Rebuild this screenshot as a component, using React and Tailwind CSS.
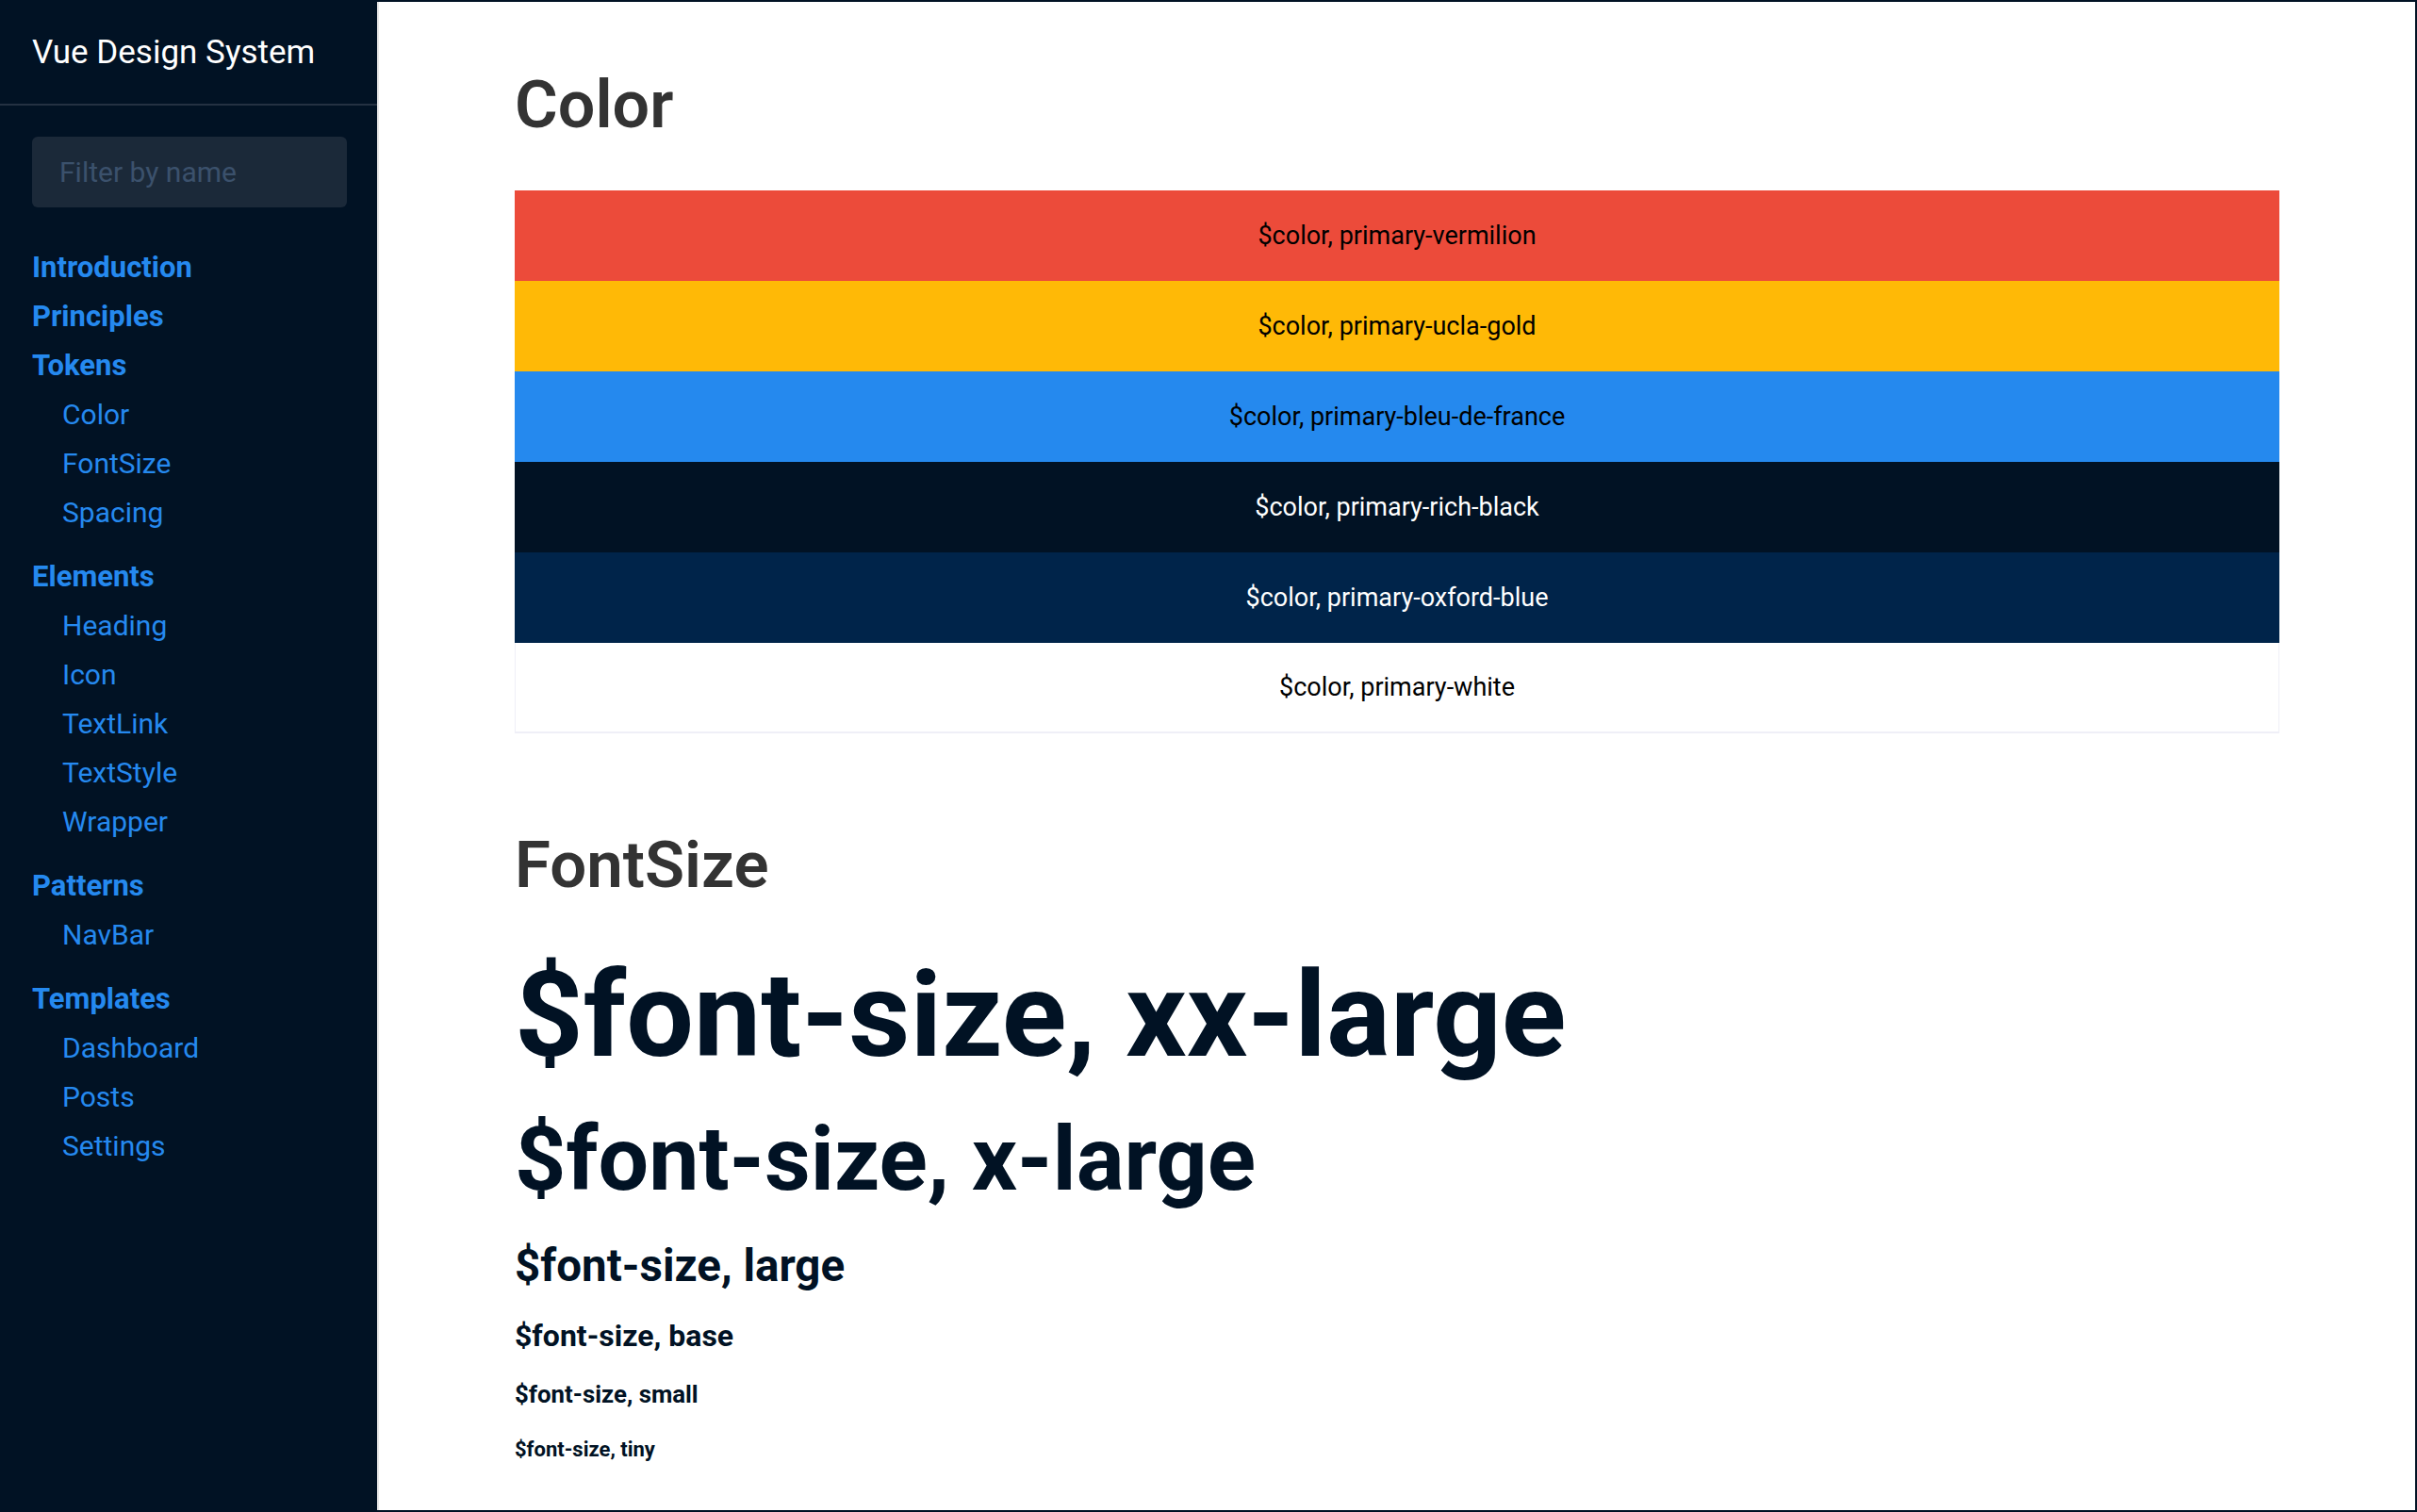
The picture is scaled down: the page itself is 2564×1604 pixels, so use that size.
import React from "react";

const FONT = { fontFamily: "Roboto, 'Noto Sans', Arial, sans-serif" };

const nav = [
  { title: "Introduction" },
  { title: "Principles" },
  { title: "Tokens", items: ["Color", "FontSize", "Spacing"] },
  { title: "Elements", items: ["Heading", "Icon", "TextLink", "TextStyle", "Wrapper"] },
  { title: "Patterns", items: ["NavBar"] },
  { title: "Templates", items: ["Dashboard", "Posts", "Settings"] },
];

const swatches = [
  { name: "primary-vermilion", cls: "bg-[#ec4b3a] text-black" },
  { name: "primary-ucla-gold", cls: "bg-[#ffb906] text-black" },
  { name: "primary-bleu-de-france", cls: "bg-[#2589ee] text-black" },
  { name: "primary-rich-black", cls: "bg-[#011224] text-white" },
  { name: "primary-oxford-blue", cls: "bg-[#00244a] text-white" },
  { name: "primary-white", cls: "bg-white text-black border-x border-b-2 border-[#efeff7]" },
];

function Sidebar() {
  return (
    <aside className="w-[400px] shrink-0 bg-[#011224] flex flex-col">
      <div className="h-[110px] flex items-center px-[34px] border-b-2 border-[#243142]">
        <span className="text-white text-[35px] font-normal leading-normal">Vue Design System</span>
      </div>
      <div className="mt-[33px] mx-[34px] w-[334px] h-[75px] rounded-[6px] bg-[#1b2939] flex items-center pl-[29px]">
        <span className="text-[#3b516c] text-[30px] leading-none">Filter by name</span>
      </div>
      <nav className="mt-[38px] px-[34px] flex flex-col">
        {nav.map((g) => (
          <div key={g.title} className={g.items ? "mb-[16px]" : ""}>
            <div className="h-[52px] leading-[52px] text-[31px] font-bold text-[#2589ef]">{g.title}</div>
            {g.items &&
              g.items.map((it) => (
                <div key={it} className="h-[52px] leading-[52px] text-[30px] font-normal text-[#2589ef] pl-[32px]">
                  {it}
                </div>
              ))}
          </div>
        ))}
      </nav>
    </aside>
  );
}

function Main() {
  return (
    <main className="flex-1 bg-white border-l-2 border-[#e6e6e6] px-[144px] overflow-hidden">
      <h1 className="mt-[67px] text-[70px] leading-[84px] font-semibold text-[#333333]">Color</h1>
      <div className="mt-[49px] flex flex-col">
        {swatches.map((s) => (
          <div key={s.name} className={`h-[96px] flex items-center justify-center text-[27px] ${s.cls}`}>
            $color, {s.name}
          </div>
        ))}
      </div>
      <h2 className="mt-[98px] text-[69px] leading-[84px] font-semibold text-[#333333]">FontSize</h2>
      <div className="text-[#011224] font-bold">
        <div className="mt-[38px] text-[127px] leading-[158px]">$font-size, xx-large</div>
        <div className="mt-[14px] text-[95px] leading-[119px]">$font-size, x-large</div>
        <div className="mt-[25px] text-[47.5px] leading-[59px]">$font-size, large</div>
        <div className="mt-[25px] text-[32px] leading-[38px]">$font-size, base</div>
        <div className="mt-[27px] text-[25.8px] leading-[32px]">$font-size, small</div>
        <div className="mt-[29px] text-[22px] leading-[27px]">$font-size, tiny</div>
      </div>
    </main>
  );
}

export default function App() {
  return (
    <div style={FONT} className="w-[2564px] h-[1604px] bg-[#011224] pt-[2px] pr-[2px] pb-[2px] flex overflow-hidden">
      <Sidebar />
      <Main />
    </div>
  );
}
